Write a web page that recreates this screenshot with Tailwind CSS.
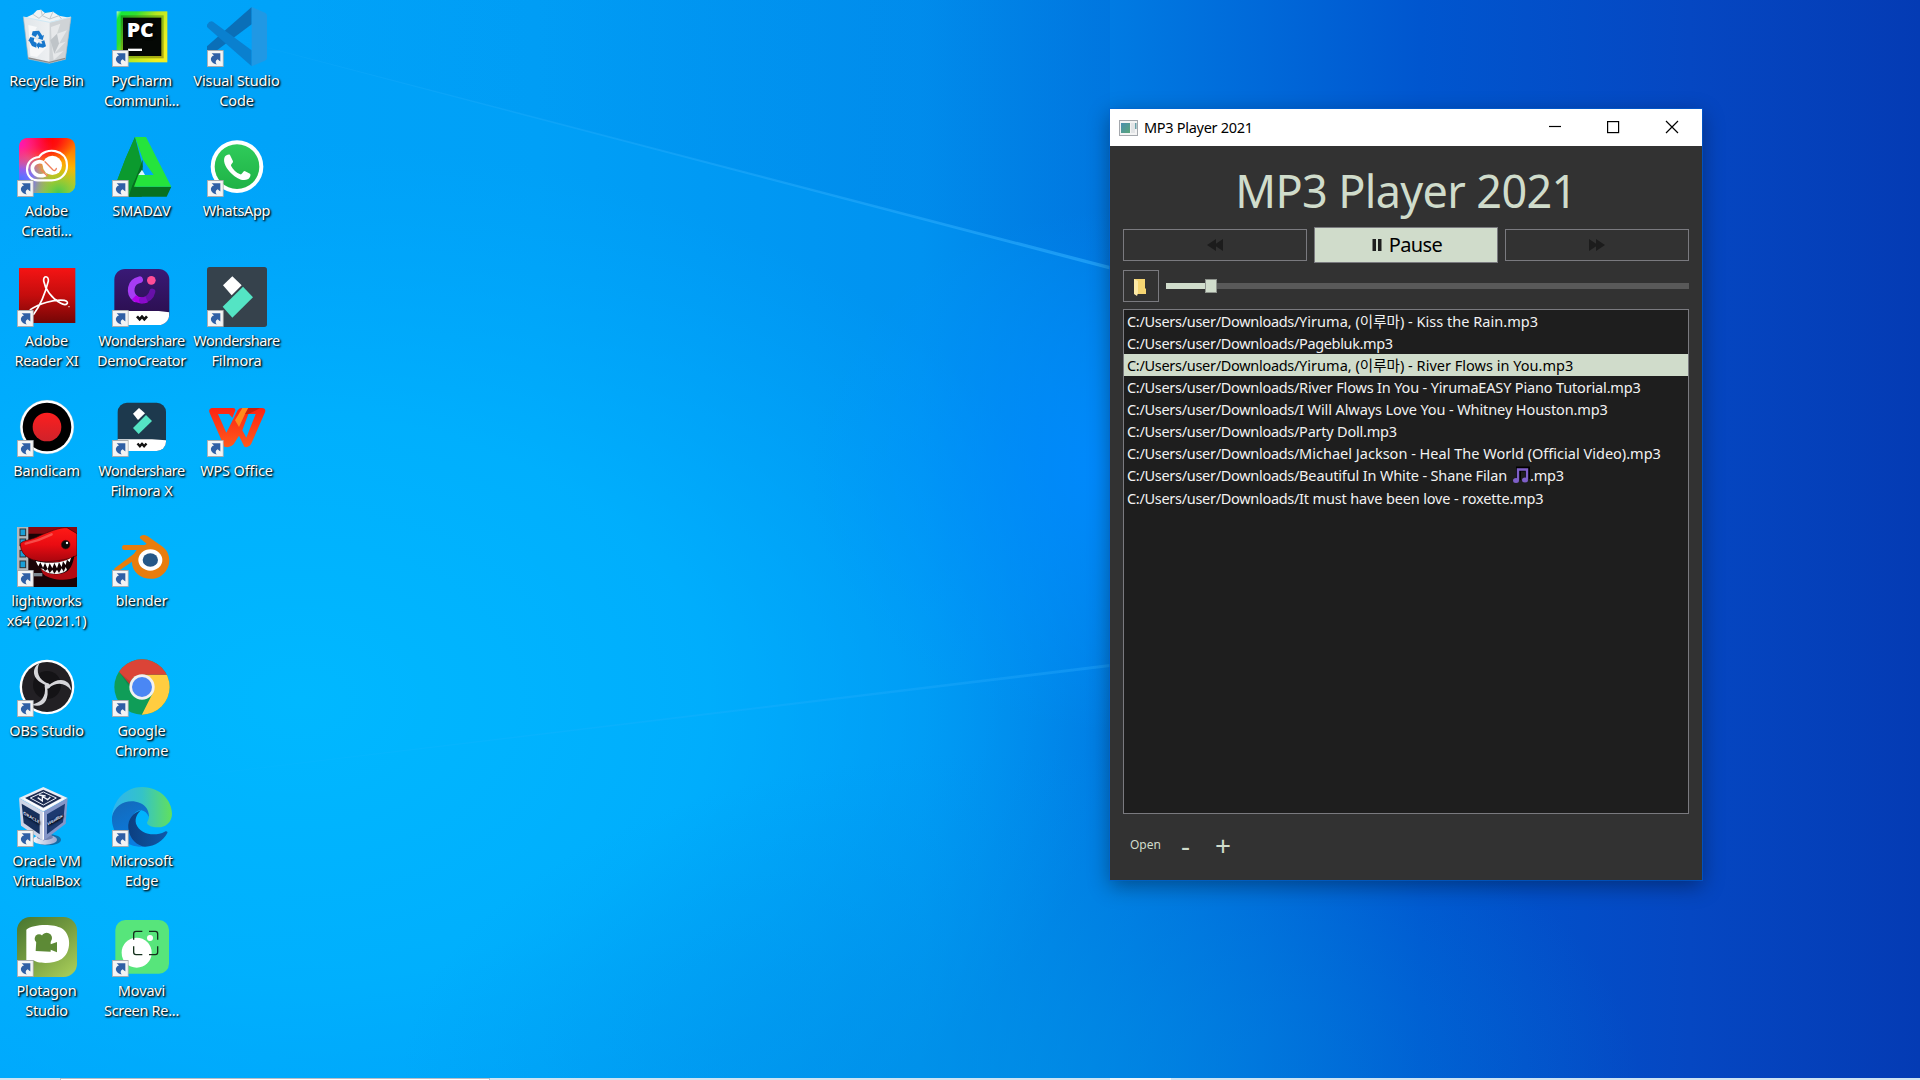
<!DOCTYPE html>
<html lang="en">
<head>
<meta charset="utf-8">
<title>Desktop</title>
<script src="https://cdn.jsdelivr.net/npm/@tailwindcss/browser@4"></script>
</head>
<body class="font-['Noto_Sans','Noto_Sans_CJK_KR',sans-serif] overflow-hidden">
<svg class="hidden">
  <defs>
    <symbol id="lnk" viewBox="0 0 50 50">
      <rect x="1" y="1" width="48" height="48" fill="#f4f4f4" stroke="#a9abae" stroke-width="3"/>
      <path d="M14 9H40V34L32 27C25 31 24 37 29 43C17 41 8 30 13 22C15 18 18 17 21 16Z" fill="#2f5fa5"/>
    </symbol>
    <symbol id="ws" viewBox="0 0 40 20">
      <path d="M5 4L13 13L20 5L27 13L35 4" fill="none" stroke="#111" stroke-width="8" stroke-linejoin="miter"/>
    </symbol>
  </defs>
</svg>
<div class="relative flex h-[1080px] w-[1920px] flex-col overflow-hidden bg-[#00a8fb]">
  <!-- wallpaper -->
  <svg class="absolute inset-0" width="1920" height="1080" viewBox="0 0 1920 1080">
    <defs>
      <linearGradient id="w1"><stop offset="0" stop-color="#00a6fb"/><stop offset=".28" stop-color="#00a0f7"/><stop offset=".48" stop-color="#0092f0"/><stop offset=".6" stop-color="#0076e0"/><stop offset=".74" stop-color="#0056cf"/><stop offset=".88" stop-color="#0547c2"/><stop offset="1" stop-color="#043bb4"/></linearGradient>
      <radialGradient id="w2" gradientUnits="userSpaceOnUse" cx="0" cy="0" r="1" gradientTransform="translate(300 700) scale(820 560)"><stop offset="0" stop-color="#00b8ff"/><stop offset=".5" stop-color="#00b4ff" stop-opacity=".75"/><stop offset="1" stop-color="#00acff" stop-opacity="0"/></radialGradient>
      <radialGradient id="w3" gradientUnits="userSpaceOnUse" cx="0" cy="0" r="1" gradientTransform="translate(1110 470) scale(300 260)"><stop offset="0" stop-color="#008aff" stop-opacity=".9"/><stop offset="1" stop-color="#0096ff" stop-opacity="0"/></radialGradient>
      <linearGradient id="w4" gradientUnits="userSpaceOnUse" x1="300" y1="0" x2="1110" y2="0"><stop offset="0" stop-color="#0058c8" stop-opacity="0"/><stop offset="1" stop-color="#0058c8" stop-opacity=".42"/></linearGradient>
      <linearGradient id="w5"><stop offset="0" stop-color="#35b8ff" stop-opacity="0"/><stop offset="1" stop-color="#30b0ff" stop-opacity=".6"/></linearGradient>
      <radialGradient id="w7" gradientUnits="userSpaceOnUse" cx="0" cy="0" r="1" gradientTransform="translate(1020 1080) scale(620 330)"><stop offset="0" stop-color="#0090e4" stop-opacity=".6"/><stop offset="1" stop-color="#0090e4" stop-opacity="0"/></radialGradient>
    </defs>
    <rect width="1920" height="1080" fill="url(#w1)"/>
    <rect width="1920" height="1080" fill="url(#w2)"/>
    <rect width="1920" height="1080" fill="url(#w3)"/>
    <path d="M300 0H1110V268L300 56Z" fill="url(#w4)" opacity=".35"/>
    <rect width="1920" height="1080" fill="url(#w7)"/>
    <path d="M100 4L1110 266V269.500Z" fill="url(#w5)"/>
    <path d="M60 792L1110 664V667Z" fill="url(#w5)" opacity=".55"/>
  </svg>

  <!-- desktop shortcuts -->
  <main class="relative grid h-[1078px] w-[285px] shrink-0 grid-flow-col grid-cols-[repeat(3,95px)] grid-rows-[repeat(8,130px)] pt-[7px] text-center text-[14.5px] leading-5 tracking-[-0.15px] text-white [text-shadow:1px_1px_2px_#000,1px_1px_2px_rgba(0,0,0,.8)] *:pr-0.5">
    <div>
      <svg class="mb-[3px] ml-[17px] size-[60px]" viewBox="0 0 180 180">
        <defs><linearGradient id="rb"><stop offset="0" stop-color="#dfe5e9"/><stop offset=".55" stop-color="#eef0f2"/><stop offset="1" stop-color="#b9c2c8"/></linearGradient></defs>
        <path d="M22 34L48 22L60 10L72 8L84 18L108 14L126 26L158 32L148 60H30Z" fill="#f1f3f4"/>
        <path d="M48 22L66 34L84 18M72 8L76 26L98 36L108 14M98 36L126 26L138 42" fill="none" stroke="#c3c9cd" stroke-width="3"/>
        <path d="M19 30L98 46L162 30L145 157L97 169L34 156Z" fill="url(#rb)"/>
        <path d="M98 46L162 30L145 157L97 169Z" fill="#cfd3d6"/>
        <path d="M102 60L130 50L120 80L150 70L126 110L146 104L112 140L140 132L110 160L104 110Z" fill="#e6e8ea"/>
        <path d="M120 80L126 110L112 140L100 100Z" fill="#bfc4c8"/>
        <path d="M34 54L60 60L44 90L90 120L60 150L40 146Z" fill="#f7f8f9"/>
        <path d="M19 30L98 46L162 30" fill="none" stroke="#cfe9f6" stroke-width="3"/>
        <path d="M19 30L34 156L97 169L145 157L162 30" fill="none" stroke="#a8b4bb" stroke-width="2"/>
        <path d="M34 153L97 166L145 154" fill="none" stroke="#8d8d8d" stroke-width="4"/>
        <g fill="#1777cc"><path d="M47 73L66 71L76 86L81 84L77 99L62 94L67 91L61 81L56 90L44 84Z"/><path d="M40 90L52 93L50 103L59 108L58 122L45 117L37 103L34 101Z"/><path d="M82 100L87 118L78 122L66 120V126L57 114L67 104V109L76 110L73 103Z"/></g>
      </svg>Recycle Bin</div>
    <div>
      <svg class="mb-[3px] ml-[17px] size-[60px]" viewBox="0 0 180 180">
        <defs>
          <radialGradient id="cc1" cx=".5" cy="0" r=".5"><stop offset="0" stop-color="#ff0000"/><stop offset=".4" stop-color="#ff1010"/><stop offset="1" stop-color="#ff1010" stop-opacity="0"/></radialGradient>
          <radialGradient id="cc2" cx="0" cy=".1" r=".6"><stop offset="0" stop-color="#ff10c0"/><stop offset="1" stop-color="#ff10a0" stop-opacity="0"/></radialGradient>
          <radialGradient id="cc3" cx="0" cy=".8" r=".6"><stop offset="0" stop-color="#4a70ff"/><stop offset=".4" stop-color="#7a70ff"/><stop offset="1" stop-color="#9a70e0" stop-opacity="0"/></radialGradient>
          <radialGradient id="cc4" cx=".7" cy="1" r=".55"><stop offset="0" stop-color="#48c850"/><stop offset="1" stop-color="#a0d030" stop-opacity="0"/></radialGradient>
          <linearGradient id="cc5" x1="0" y1="0" x2="0" y2="1"><stop offset="0" stop-color="#ff5a00"/><stop offset=".55" stop-color="#ffb400"/><stop offset="1" stop-color="#b8d430"/></linearGradient>
        </defs>
        <g><rect x="6" y="3" width="169" height="165" rx="26" fill="url(#cc5)"/><rect x="6" y="3" width="169" height="165" rx="26" fill="url(#cc1)"/><rect x="6" y="3" width="169" height="165" rx="26" fill="url(#cc3)"/><rect x="6" y="3" width="169" height="165" rx="26" fill="url(#cc4)"/><rect x="6" y="3" width="169" height="165" rx="26" fill="url(#cc2)"/></g>
        <path d="M66 130C20 134 16 64 66 60C84 30 150 34 150 86C150 112 130 130 104 130Z" fill="none" stroke="#fff" stroke-width="6.500"/>
        <circle cx="106" cy="85" r="29" fill="#fff"/>
        <path d="M84 114C60 122 46 106 46 94C47 76 70 68 82 80L106 104" fill="none" stroke="#fff" stroke-width="11" stroke-linecap="round"/>
        <path d="M72 98L90 116M84 74L108 99C112 102 118 100 118 94" fill="none" stroke="#f0805a" stroke-width="4" stroke-linecap="round"/>
        <use href="#lnk" x="0" y="129" width="50" height="51"/>
      </svg>Adobe<br>Creati...</div>
    <div>
      <svg class="mb-[3px] ml-[17px] size-[60px]" viewBox="0 0 180 180">
        <defs><linearGradient id="ar" x1="0" y1="0" x2="0" y2="1"><stop offset="0" stop-color="#f51414"/><stop offset=".5" stop-color="#c40d0d"/><stop offset="1" stop-color="#740606"/></linearGradient></defs>
        <rect x="6" y="3" width="169" height="165" fill="url(#ar)"/>
        <path d="M50 142C72 112 88 66 94 42C96 26 78 24 80 42C84 66 104 94 130 108C150 120 160 104 142 100C112 96 66 110 40 128" fill="none" stroke="#fff" stroke-width="5" stroke-linecap="round"/>
        <circle cx="156" cy="119" r="2" fill="#fff"/>
        <use href="#lnk" x="0" y="129" width="50" height="51"/>
      </svg>Adobe<br>Reader XI</div>
    <div>
      <svg class="mb-[3px] ml-[17px] size-[60px]" viewBox="0 0 180 180">
        <defs><linearGradient id="bc" x1="0" y1="0" x2="0" y2="1"><stop offset="0" stop-color="#fc1f1f"/><stop offset="1" stop-color="#d0222a"/></linearGradient></defs>
        <circle cx="90" cy="90" r="81" fill="#fff" stroke="#5aa6c8" stroke-width="1"/><circle cx="90" cy="90" r="73" fill="#000"/><circle cx="90" cy="90" r="43" fill="url(#bc)"/>
        <use href="#lnk" x="0" y="129" width="50" height="51"/>
      </svg>Bandicam</div>
    <div>
      <svg class="mb-[3px] ml-[17px] size-[60px]" viewBox="0 0 180 180">
        <defs><linearGradient id="lw" x1="0" y1="0" x2="0" y2="1"><stop offset="0" stop-color="#ff1a16"/><stop offset=".5" stop-color="#ea0c12"/><stop offset="1" stop-color="#a8060e"/></linearGradient></defs>
        <rect width="180" height="180" fill="#1a0406"/>
        <path d="M34 0H180V20H34Z" fill="#8a0a10"/>
        <rect width="34" height="132" fill="#b3b9bd"/>
        <g fill="#1aa0d8" stroke="#2a3338" stroke-width="3"><rect x="9" y="6" width="17" height="20"/><rect x="9" y="36" width="17" height="20"/><rect x="9" y="70" width="17" height="20"/><rect x="9" y="102" width="17" height="20"/></g>
        <path d="M60 100L180 80V150C150 164 100 160 78 140Z" fill="#b20a12"/>
        <path d="M10 54C8 40 40 40 60 30C90 16 130 0 150 2L180 20V84C172 92 130 104 80 104C50 104 12 90 10 54Z" fill="url(#lw)" stroke="#3a0508" stroke-width="2"/>
        <path d="M26 50C60 42 84 32 104 22" stroke="#ff8a80" stroke-width="7" fill="none" opacity=".5" stroke-linecap="round"/>
        <path d="M52 98C90 112 150 108 172 86C168 110 160 132 140 138C110 148 80 138 66 118Z" fill="#120204"/>
        <path d="M56 102L64 118L70 106L78 122L84 108L92 126L98 109L106 124L112 108L120 124L126 106L134 120L138 103L146 114L150 98L158 106L162 92C140 108 90 112 56 102Z" fill="#fff"/>
        <path d="M72 124L80 126L84 132L92 126L98 138L106 128L112 140L120 128L126 138L134 124L140 134L146 120L150 128C140 142 96 150 72 124Z" fill="#f2f2f2"/>
        <circle cx="146" cy="53" r="13" fill="#0a0a0a" stroke="#6a0a0e" stroke-width="2"/><circle cx="150" cy="48" r="3.500" fill="#fff"/>
        <path d="M50 138H76V148H50Z" fill="#7c8890"/>
        <use href="#lnk" x="0" y="129" width="50" height="51"/>
      </svg><span class="tracking-[-0.1px]">lightworks</span><br><span class="tracking-[-0.2px]">x64 (2021.1)</span></div>
    <div>
      <svg class="mb-[3px] ml-[17px] size-[60px]" viewBox="0 0 180 180">
        <circle cx="90" cy="90" r="82" fill="#fff"/><circle cx="90" cy="90" r="75" fill="#222024"/><circle cx="90" cy="84" r="42" fill="#141316"/>
        <g fill="#d6d6da">
          <path id="ob" d="M67 18C40 36 46 72 92 86L94 80C64 68 56 44 67 18Z"/>
          <use href="#ob" transform="rotate(120 91 87)"/><use href="#ob" transform="rotate(240 91 87)"/>
          <circle cx="91" cy="87" r="8"/>
        </g>
        <use href="#lnk" x="0" y="129" width="50" height="51"/>
      </svg>OBS Studio</div>
    <div>
      <svg class="mb-[3px] ml-[17px] size-[60px]" viewBox="0 0 180 180">
        <defs><linearGradient id="vb"><stop offset="0" stop-color="#f4f6fb"/><stop offset="1" stop-color="#9aa8d0"/></linearGradient></defs>
        <ellipse cx="92" cy="158" rx="40" ry="17" fill="#1c3f70" opacity=".6"/><ellipse cx="84" cy="158" rx="36" ry="15" fill="url(#vb)"/><ellipse cx="84" cy="150" rx="24" ry="9" fill="#6f80b0"/>
        <path d="M79 0L152 33L79 74L6 33Z" fill="#e9edf5"/>
        <path d="M6 33L79 74V162L12 116Z" fill="#cdd4e6"/>
        <path d="M152 33L79 74V162L146 110Z" fill="#8496c8"/>
        <path d="M79 8L134 33L79 62L24 33Z" fill="#1c2b50"/>
        <path d="M79 15L118 33L79 54L40 33Z" fill="none" stroke="#e8ecf6" stroke-width="3"/><path d="M62 32L76 42L76 28L92 38L100 30M66 24L86 27" fill="none" stroke="#f2f4fa" stroke-width="4"/>
        <path d="M14 50L68 82V142L20 108Z" fill="#17305c"/><path d="M144 50L90 82V142L138 106Z" fill="#1d3a70"/>
        <path d="M20 34L79 68L140 34M79 74V158" fill="none" stroke="#fff" stroke-width="4"/>
        <text transform="matrix(1 .58 0 1 19 82)" font-size="13" font-weight="700" fill="#d8def0" textLength="48">ORACLE</text>
        <text transform="matrix(1 -.58 0 1 91 116)" font-size="13" font-weight="700" fill="#d8def0" textLength="46">VirtualBox</text>
        <use href="#lnk" x="0" y="129" width="50" height="51"/>
      </svg>Oracle VM<br><span class="tracking-[-0.3px]">VirtualBox</span></div>
    <div>
      <svg class="mb-[3px] ml-[17px] size-[60px]" viewBox="0 0 180 180">
        <defs><linearGradient id="pl" x1="0" y1="0" x2=".8" y2="1"><stop offset="0" stop-color="#47752f"/><stop offset=".5" stop-color="#73993f"/><stop offset="1" stop-color="#a3c957"/></linearGradient></defs>
        <rect width="180" height="180" rx="40" fill="url(#pl)"/>
        <path d="M28 38C50 20 110 20 134 34C164 52 164 106 134 126C110 142 60 140 50 130H28Z" fill="#fff"/>
        <g fill="#5d8a36"><circle cx="66" cy="65" r="13"/><circle cx="89" cy="63" r="16"/><path d="M58 70H101V82L120 75V106L101 98V104L56 102Z"/></g>
        <use href="#lnk" x="0" y="129" width="50" height="51"/>
      </svg>Plotagon<br>Studio</div>

    <div>
      <svg class="mb-[3px] ml-[17px] size-[60px]" viewBox="0 0 180 180">
        <defs><linearGradient id="pc" x1="0" y1="0" x2="1" y2=".6"><stop offset="0" stop-color="#c8ffc0"/><stop offset=".08" stop-color="#18e838"/><stop offset=".3" stop-color="#30e030"/><stop offset=".6" stop-color="#b8e820"/><stop offset="1" stop-color="#f2f020"/></linearGradient><linearGradient id="pd" x1="0" y1="0" x2="1" y2="1"><stop offset="0" stop-color="#10a020"/><stop offset=".5" stop-color="#88b818"/><stop offset="1" stop-color="#b0a810"/></linearGradient></defs>
        <rect x="14" y="13" width="152" height="153" fill="url(#pc)"/>
        <rect x="26" y="25" width="129" height="129" fill="url(#pd)"/>
        <rect x="33" y="32" width="115" height="115" fill="#050805"/>
        <text x="44" y="89" font-family="Open Sans" font-size="57" font-weight="800" fill="#fff" textLength="81" lengthAdjust="spacingAndGlyphs">PC</text>
        <rect x="48" y="125" width="42" height="7" fill="#fff"/>
        <use href="#lnk" x="0" y="129" width="50" height="51"/>
      </svg>PyCharm<br><span class="tracking-[-0.35px]">Communi...</span></div>
    <div>
      <svg class="mb-[3px] ml-[17px] size-[60px]" viewBox="0 0 180 180">
        <path d="M69 0L40 66L10 145L66 148L92 88Z" fill="#0b9a2e"/>
        <path d="M92 88L68 130L10 145L50 179H164L178 149H66Z" fill="#077020"/>
        <path d="M69 0L86 90L60 148L50 179L10 145L40 66Z" fill="#0b9a2e"/>
        <path d="M92 68L50 179H90L70 150L92 112Z" fill="#077020"/>
        <path d="M69 0H102L178 149H66L79 114H125L93 68Z" fill="#25e43c"/>
        <path d="M79 114H99L90 98Z" fill="#d8f6ff"/>
        <use href="#lnk" x="0" y="129" width="50" height="51"/>
      </svg><span class="tracking-[-0.1px]">SMADΔV</span></div>
    <div>
      <svg class="mb-[3px] ml-[17px] size-[60px]" viewBox="0 0 180 180">
        <defs><linearGradient id="dc" x1="0" y1="0" x2="0" y2="1"><stop offset="0" stop-color="#3a1a78"/><stop offset="1" stop-color="#280c46"/></linearGradient><clipPath id="dk"><rect x="7" y="6" width="165" height="168" rx="32"/></clipPath></defs>
        <g clip-path="url(#dk)"><rect width="180" height="180" fill="url(#dc)"/><path d="M0 132H140L172 136V180H0Z" fill="#fff"/></g>
        <path d="M83 38C54 44 50 78 70 95" fill="none" stroke="#a63cf4" stroke-width="20" stroke-linecap="round"/>
        <path d="M66 91C76 101 92 102 104 97" fill="none" stroke="#b000e8" stroke-width="19"/>
        <path d="M90 100C108 98 118 88 121 74" fill="none" stroke="#7a10c0" stroke-width="18" stroke-linecap="round" opacity=".75"/>
        <circle cx="118" cy="40" r="13" fill="#ff4d97"/>
        <use href="#ws" x="70" y="144" width="40" height="20"/>
        <use href="#lnk" x="0" y="129" width="50" height="51"/>
      </svg><span class="tracking-[-0.5px]">Wondershare</span><br><span class="tracking-[-0.3px]">DemoCreator</span></div>
    <div>
      <svg class="mb-[3px] ml-[17px] size-[60px]" viewBox="0 0 180 180">
        <defs><clipPath id="fk"><rect x="17" y="17" width="145" height="145" rx="28"/></clipPath></defs>
        <g clip-path="url(#fk)"><rect width="180" height="180" fill="#1d394d"/><path d="M0 127H120L170 130V180H0Z" fill="#fff"/></g>
        <path d="M81 33L99 49L78 69L63 50Z" fill="#fff"/><path d="M102 54L120 72L80 111L63 93Z" fill="#54e4c4"/>
        <use href="#ws" x="72" y="136" width="36" height="18"/>
        <use href="#lnk" x="0" y="129" width="50" height="51"/>
      </svg><span class="tracking-[-0.5px]">Wondershare</span><br>Filmora X</div>
    <div>
      <svg class="mb-[3px] ml-[17px] size-[60px]" viewBox="0 0 180 180">
        <path d="M92 25C102 22 110 30 122 38L150 58C184 82 176 132 142 150C104 168 58 140 60 104L14 136C8 134 5 128 8 124L66 80L74 69H36C28 66 28 56 36 54H98L104 50L84 34C82 30 86 26 92 25Z" fill="#e87d0d"/>
        <ellipse cx="115" cy="99" rx="36" ry="32" fill="#fff"/><ellipse cx="115" cy="99" rx="23" ry="20" fill="#265787"/>
        <use href="#lnk" x="0" y="129" width="50" height="51"/>
      </svg><span class="tracking-[-0.1px]">blender</span></div>
    <div>
      <svg class="mb-[3px] ml-[17px] size-[60px]" viewBox="0 0 180 180">
        <defs><clipPath id="ck"><circle cx="90" cy="90" r="83"/></clipPath></defs>
        <g clip-path="url(#ck)"><rect width="180" height="180" fill="#0f9d58"/><path d="M90 53H180V180H86L122 109Z" fill="#ffcd40"/><path d="M0 0H180V53H90C70 53 56 66 53 82L21 44Z" fill="#db4437"/><path d="M22 46L54 92L60 78Z" fill="#000" opacity=".12"/></g>
        <circle cx="90" cy="90" r="38" fill="#f1f1f1"/><circle cx="90" cy="90" r="30" fill="#4a87f4"/>
        <use href="#lnk" x="0" y="129" width="50" height="51"/>
      </svg>Google<br>Chrome</div>
    <div>
      <svg class="mb-[3px] ml-[17px] size-[60px]" viewBox="0 0 180 180">
        <defs>
          <linearGradient id="e1"><stop offset="0" stop-color="#2fb4f0"/><stop offset=".5" stop-color="#34c3c8"/><stop offset="1" stop-color="#62e05c"/></linearGradient>
          <linearGradient id="e2" x1="0" y1="0" x2=".4" y2="1"><stop offset="0" stop-color="#1468b8"/><stop offset="1" stop-color="#0a7ce0"/></linearGradient>
          <linearGradient id="e3"><stop offset="0" stop-color="#0c3f80"/><stop offset="1" stop-color="#0f58a8"/></linearGradient>
        </defs>
        <path d="M0 88C4 38 42 0 90 0C146 0 180 42 180 80C180 106 160 121 138 121C112 121 102 110 106 104C114 94 112 80 104 70C80 40 20 42 0 88Z" fill="url(#e1)"/>
        <path d="M0 90C8 50 50 34 84 48C104 56 112 74 110 90C106 78 98 72 88 70C70 68 58 88 60 108C62 140 78 164 100 179C40 184 -4 140 0 90Z" fill="url(#e2)"/>
        <path d="M88 70C66 76 46 96 49 124C52 156 76 178 100 179C130 178 154 160 166 138C168 134 164 131 158 134C128 150 84 142 72 110C68 94 76 78 88 70Z" fill="url(#e3)"/>
        <use href="#lnk" x="0" y="129" width="50" height="51"/>
      </svg>Microsoft<br>Edge</div>
    <div>
      <svg class="mb-[3px] ml-[17px] size-[60px]" viewBox="0 0 180 180">
        <rect x="10" y="9" width="161" height="161" rx="30" fill="#57e57b"/><circle cx="74" cy="107" r="45" fill="#fff"/><circle cx="114" cy="63" r="9" fill="#fff"/>
        <path d="M65 68V50Q65 43 72 43H91M111 43H130Q137 43 137 50V68M137 88V106Q137 113 130 113H111M91 113H72Q65 113 65 106V88" fill="none" stroke="#14301c" stroke-width="4"/>
        <use href="#lnk" x="0" y="129" width="50" height="51"/>
      </svg>Movavi<br><span class="tracking-[-0.3px]">Screen Re...</span></div>

    <div>
      <svg class="mb-[3px] ml-[17px] size-[60px]" viewBox="0 0 180 180">
        <path d="M134 0V52L14 142Q8 146 0 138V118Z" fill="#0a6fb8"/>
        <path d="M0 53Q8 40 18 44L134 130V178L4 64Q-2 58 0 53Z" fill="#0a80cf"/>
        <path d="M134 0L174 17Q180 20 180 26V152Q180 158 174 161L134 178Z" fill="#2098e4"/>
        <use href="#lnk" x="0" y="129" width="50" height="51"/>
      </svg><span class="tracking-[-0.1px]">Visual Studio</span><br>Code</div>
    <div>
      <svg class="mb-[3px] ml-[17px] size-[60px]" viewBox="0 0 180 180">
        <defs><linearGradient id="wa" x1="0" y1="0" x2="0" y2="1"><stop offset="0" stop-color="#2fcb5a"/><stop offset="1" stop-color="#1fb246"/></linearGradient></defs>
        <circle cx="90" cy="89" r="79" fill="#fff"/><circle cx="90" cy="89" r="67" fill="url(#wa)"/>
        <path d="M53 60C56 54 66 51 69 54L78 73C79 78 71 82 72 86C78 98 88 107 100 112C105 114 108 102 113 102L129 110C133 114 128 124 122 127C108 134 88 124 74 110C60 98 46 76 53 60Z" fill="#fff"/>
        <use href="#lnk" x="0" y="129" width="50" height="51"/>
      </svg><span class="tracking-[-0.3px]">WhatsApp</span></div>
    <div>
      <svg class="mb-[3px] ml-[17px] size-[60px]" viewBox="0 0 180 180">
        <rect width="180" height="180" rx="8" fill="#36424c"/>
        <path d="M76 28L104 55L74 85L48 55Z" fill="#fff"/><path d="M108 59L138 91L76 152L47 119Z" fill="#54e4c4"/>
        <use href="#lnk" x="0" y="129" width="50" height="51"/>
      </svg><span class="tracking-[-0.5px]">Wondershare</span><br>Filmora</div>
    <div>
      <svg class="mb-[3px] ml-[17px] size-[60px]" viewBox="0 0 180 180">
        <defs><linearGradient id="wp" x1="0" y1="0" x2="0" y2="1"><stop offset="0" stop-color="#fc2413"/><stop offset="1" stop-color="#ff5a1c"/></linearGradient></defs>
        <path fill-rule="evenodd" d="M14 33H78Q88 34 84 43L76 62L66 51H33L58 107L92 40Q96 33 106 33H165Q178 34 174 46L132 142Q124 154 112 149L96 116L80 142Q70 154 52 149L8 48Q3 36 14 33ZM106 100L118 122L146 51H124Z" fill="url(#wp)"/>
        <path d="M106 33H124L114 51L96 90L84 70Z" fill="#ff8a1c"/><path d="M124 33H160L124 51H114Z" fill="#b81c08" opacity=".7"/>
        <use href="#lnk" x="0" y="129" width="50" height="51"/>
      </svg>WPS Office</div>
  </main>

  <!-- taskbar edge -->
  <footer class="relative flex h-0.5 w-full bg-[#cfe4f3]">
    <div class="ml-[60px] h-0.5 w-[430px] border-x border-t border-[#b9bcc4] bg-white"></div>
    <div class="ml-[620px] h-0.5 w-[61px] bg-[#f1f6fb]"></div>
  </footer>

  <!-- player window -->
  <section class="absolute left-[1110px] top-[109px] flex h-[771px] w-[592px] flex-col bg-[#323232] shadow-[0_0_0_1px_rgba(0,100,215,.55),0_6px_20px_rgba(0,0,0,.38)]">
    <header class="flex h-[37px] items-center bg-white pl-[9px]">
      <svg width="19" height="16" viewBox="0 0 19 16"><defs><linearGradient id="ti" x1="0" y1="0" x2="1" y2="1"><stop offset="0" stop-color="#4a8fae"/><stop offset="1" stop-color="#5aa57a"/></linearGradient></defs><rect x=".5" y=".5" width="18" height="15" fill="#f3f3f3" stroke="#a4a8ad"/><rect x="2" y="3" width="9" height="10" fill="url(#ti)"/><rect x="12" y="3" width="4" height="10" fill="#e2e4e6"/><rect x="16" y="3" width="1.500" height="6" fill="#6aa0a8"/></svg>
      <h1 class="ml-1.5 grow text-[14.5px] tracking-[-0.3px] text-black">MP3 Player 2021</h1>
      <svg width="174" height="37" viewBox="0 0 174 37" fill="none" stroke="#000" stroke-width="1.2"><path d="M21 17.500H33" /><rect x="79.600" y="12.600" width="11" height="11"/><path d="M138 12L150 24M150 12L138 24"/></svg>
    </header>
    <div class="flex grow flex-col px-[13px]">
      <h2 class="mt-4 h-[65px] text-center text-[45px] leading-[57px] tracking-[-0.65px] text-[#d0dccb]">MP3 Player 2021</h2>
      <div class="flex h-9 items-center gap-[7px]">
        <button class="flex h-8 flex-1 items-center justify-center border border-[#7a7a7f]"><svg width="16" height="12" viewBox="0 0 16 12" fill="#1c1c1c"><path d="M0 6L9 0V12ZM7 6L16 0V12Z"/></svg></button>
        <button class="flex h-9 flex-1 items-center justify-center gap-[7px] border border-[#7a7a7f] bg-[#d0dccb] text-xl tracking-[-0.6px] text-black"><svg class="ml-0.5" width="10" height="13" viewBox="0 0 10 13" fill="#1e1e1e"><path d="M0.500 0H4V12H0.500ZM6 0H9.500V12H6Z"/></svg>Pause</button>
        <button class="flex h-8 flex-1 items-center justify-center border border-[#7a7a7f]"><svg width="16" height="12" viewBox="0 0 16 12" fill="#1c1c1c"><path d="M16 6L7 0V12ZM9 6L0 0V12Z"/></svg></button>
      </div>
      <div class="mt-[7px] flex h-8 items-center gap-[7px]">
        <button class="flex h-8 w-9 items-center justify-center border border-[#7a7a7f]"><svg class="-ml-0.5 mt-px" width="12" height="18" viewBox="0 0 12 18"><path d="M0 1H11V10L12 11V16H0Z" fill="#f6d572"/><path d="M0 1L4 3V15L3 18L0 16Z" fill="#fde9a6"/></svg></button>
        <div class="flex grow items-center"><div class="h-1.5 w-[39px] bg-[#d0dccb]"></div><div class="h-3.5 w-3 border border-[#8e938d] bg-[#d0dccb]"></div><div class="h-1.5 grow bg-[#595959]"></div></div>
      </div>
      <ul class="mt-[7px] h-[505px] border border-[#7a7a7f] bg-[#1e1e1e] text-[14.5px] leading-[22px] tracking-[-0.15px] whitespace-nowrap text-[#f2f2f2]">
        <li class="h-[22px] pl-[3px]"><span class="tracking-[-0.3px]">C:/Users/user/Downloads/</span><span class="tracking-[0.02px]">Yiruma, (이루마) - Kiss the Rain.mp3</span></li>
        <li class="h-[22px] pl-[3px]"><span class="tracking-[-0.3px]">C:/Users/user/Downloads/</span><span class="tracking-[-0.37px]">Pagebluk.mp3</span></li>
        <li class="h-[22px] bg-[#d0dccb] pl-[3px] text-black"><span class="tracking-[-0.3px]">C:/Users/user/Downloads/</span><span class="tracking-[0.02px]">Yiruma, (이루마) - River Flows in You.mp3</span></li>
        <li class="h-[22px] pl-[3px]"><span class="tracking-[-0.3px]">C:/Users/user/Downloads/</span><span class="tracking-[-0.16px]">River Flows In You - YirumaEASY Piano Tutorial.mp3</span></li>
        <li class="h-[22px] pl-[3px]"><span class="tracking-[-0.3px]">C:/Users/user/Downloads/</span><span class="tracking-[-0.1px]">I Will Always Love You - Whitney Houston.mp3</span></li>
        <li class="h-[22px] pl-[3px]"><span class="tracking-[-0.3px]">C:/Users/user/Downloads/</span><span class="tracking-[-0.22px]">Party Doll.mp3</span></li>
        <li class="h-[22px] pl-[3px]"><span class="tracking-[-0.3px]">C:/Users/user/Downloads/</span><span class="tracking-[0.01px]">Michael Jackson - Heal The World (Official Video).mp3</span></li>
        <li class="flex h-[23px] pl-[3px]"><span class="tracking-[-0.3px]">C:/Users/user/Downloads/</span><span>Beautiful In White - Shane Filan</span><svg class="mt-0.5 ml-[5px]" width="18" height="18" viewBox="0 0 18 18"><path d="M6.500 14V3H15.500V13" fill="none" stroke="#000" stroke-width="5"/><path d="M6 14V3.500H15V13" fill="none" stroke="#7e5fc8" stroke-width="2.400"/><ellipse cx="4" cy="14.500" rx="3" ry="2.500" fill="#7e5fc8"/><ellipse cx="13" cy="14" rx="3" ry="2.500" fill="#7e5fc8"/></svg><span>.mp3</span></li>
        <li class="h-[22px] pl-[3px]"><span class="tracking-[-0.3px]">C:/Users/user/Downloads/</span>It must have been love - roxette.mp3</li>
      </ul>
      <div class="mt-[15px] flex h-8 items-center pl-[7px] text-[#d0dccb]">
        <span class="w-[51px] text-[12px]">Open</span><span class="w-[34px] text-[28px] leading-8">-</span><span class="text-[28px] leading-8">+</span>
      </div>
    </div>
  </section>
</div>
</body>
</html>
